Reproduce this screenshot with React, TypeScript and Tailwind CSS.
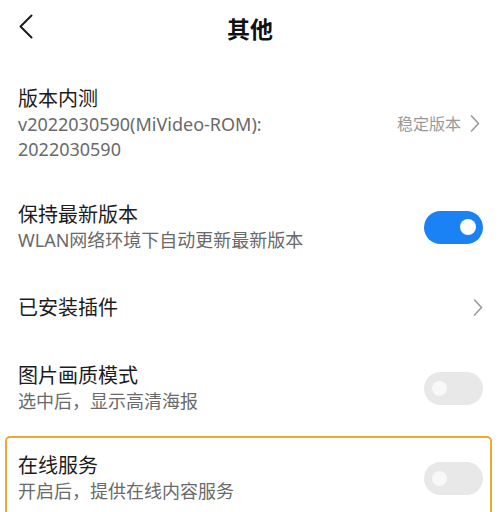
import type { ReactNode } from "react";

const font = { fontFamily: '"Noto Sans", "Noto Sans CJK SC", sans-serif' };

function Chevron({ className = "" }: { className?: string }) {
  return (
    <svg width="10" height="17" viewBox="0 0 10 17" className={className} fill="none">
      <polyline points="1.5,1 8.5,8.5 1.5,16" stroke="currentColor" strokeWidth="1.6" strokeLinecap="round" strokeLinejoin="round" />
    </svg>
  );
}

function Toggle({ on }: { on: boolean }) {
  return on ? (
    <div className="flex h-[33px] w-[59px] shrink-0 items-center justify-end rounded-full bg-[#1a82f5] pr-[7px]">
      <div className="h-[16px] w-[16px] rounded-full bg-white" />
    </div>
  ) : (
    <div className="flex h-[33px] w-[59px] shrink-0 items-center justify-start rounded-full bg-[#e8e8e8] pl-[8px]">
      <div className="h-[15px] w-[15px] rounded-full bg-[#f8f8f8]" />
    </div>
  );
}

function Row({
  title,
  sub,
  right,
  className = "",
}: {
  title: string;
  sub?: ReactNode;
  right?: ReactNode;
  className?: string;
}) {
  return (
    <div className={`flex items-center justify-between ${className}`}>
      <div className="min-w-0">
        <div className="text-[20px] leading-[26px] text-[#1c1c1c]">{title}</div>
        {sub ? <div className="text-[18px] leading-[25px] text-[#6a6a6a]">{sub}</div> : null}
      </div>
      {right}
    </div>
  );
}

export default function App() {
  return (
    <div className="h-[512px] w-[500px] overflow-hidden bg-white" style={font}>
      <header className="relative flex h-[54px] items-center justify-center">
        <svg width="14" height="25" viewBox="0 0 14 25" className="absolute left-[19px] top-[14px]" fill="none">
          <polyline points="12.5,1.5 1.5,12.5 12.5,23.5" stroke="#1c1c1c" strokeWidth="2" strokeLinecap="round" strokeLinejoin="round" />
        </svg>
        <h1 className="pt-[4px] text-[23px] font-bold leading-[30px] text-[#111]">其他</h1>
      </header>

      <div className="pt-[11.5px]">
        <Row
          className="py-[20px] pl-[18px] pr-[20px]"
          title="版本内测"
          sub={
            <>
              v2022030590(MiVideo-ROM):
              <br />
              2022030590
            </>
          }
          right={
            <div className="flex items-center gap-[9px] text-[16px] text-[#999]">
              <span>稳定版本</span>
              <Chevron />
            </div>
          }
        />
        <Row
          className="py-[20px] pl-[18px] pr-[17px]"
          title="保持最新版本"
          sub="WLAN网络环境下自动更新最新版本"
          right={<Toggle on />}
        />
        <Row
          className="py-[22px] pl-[18px] pr-[17px]"
          title="已安装插件"
          right={<Chevron className="text-[#9a9a9a]" />}
        />
        <Row
          className="py-[20px] pl-[18px] pr-[17px]"
          title="图片画质模式"
          sub="选中后，显示高清海报"
          right={<Toggle on={false} />}
        />
        <div className="ml-[5px] mr-[8px] mt-[2.5px] rounded-[5px] border-2 border-[#efa73a]">
          <Row
            className="pb-[20px] pl-[11px] pr-[7px] pt-[14.5px]"
            title="在线服务"
            sub="开启后，提供在线内容服务"
            right={<Toggle on={false} />}
          />
        </div>
      </div>
    </div>
  );
}
